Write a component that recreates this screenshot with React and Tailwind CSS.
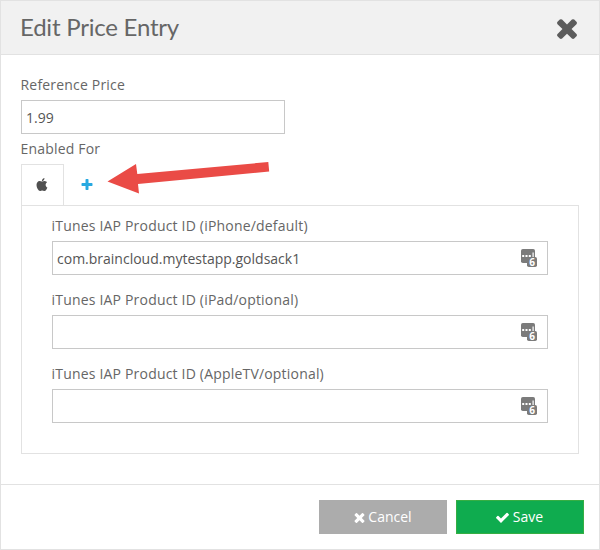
import React from "react";

const PATHS = {
  times:
    "M1490 1322q0 40-28 68l-136 136q-28 28-68 28t-68-28l-294-294-294 294q-28 28-68 28t-68-28l-136-136q-28-28-28-68t28-68l294-294-294-294q-28-28-28-68t28-68l136-136q28-28 68-28t68 28l294 294 294-294q28-28 68-28t68 28l136 136q28 28 28 68t-28 68l-294 294 294 294q28 28 28 68z",
  check:
    "M1671 566q0 40-28 68l-724 724-136 136q-28 28-68 28t-68-28l-136-136-362-362q-28-28-28-68t28-68l136-136q28-28 68-28t68 28l294 295 656-657q28-28 68-28t68 28l136 136q28 28 28 68z",
  plus:
    "M1600 736v192q0 40-28 68t-68 28h-416v416q0 40-28 68t-68 28h-192q-40 0-68-28t-28-68v-416h-416q-40 0-68-28t-28-68v-192q0-40 28-68t68-28h416v-416q0-40 28-68t68-28h192q40 0 68 28t28 68v416h416q40 0 68 28t28 68z",
  apple:
    "M1585 1215q-39 125-123 250-129 196-257 196-49 0-140-32-86-32-151-32-61 0-142 33-81 34-132 34-152 0-301-259-147-261-147-503 0-228 113-374 113-144 284-144 72 0 177 30 104 30 138 30 45 0 143-34 102-34 173-34 119 0 213 65 52 36 104 100-79 67-114 118-65 94-65 207 0 124 69 223t158 126zm-376-1173q0 61-29 136-30 75-93 138-54 54-108 72-37 11-104 17 3-149 78-257 74-107 250-148 1 3 2.500 11t2.500 11q0 4 .5 10t.5 10z",
};

function Icon({ name, className }) {
  return (
    <svg viewBox="0 0 1792 1792" fill="currentColor" className={className}>
      <path d={PATHS[name]} />
    </svg>
  );
}

// Password manager badge shown at the end of a field
function FieldBadge() {
  return (
    <svg viewBox="0 0 17 19" className="h-[19px] w-[17px] shrink-0">
      <rect x="0" y="0" width="14" height="14" rx="1.8" fill="#7b7b7b" />
      <g fill="#fff">
        <rect x="1.200" y="6" width="2" height="2" />
        <rect x="4.500" y="6" width="2" height="2" />
        <rect x="7.800" y="6" width="2" height="2" />
        <rect x="11.500" y="3.500" width="1.200" height="5" />
      </g>
      <rect x="6" y="8" width="10" height="10" rx="1.8" fill="#7b7b7b" />
      <text x="11.200" y="16.500" textAnchor="middle" fontSize="10" fontWeight="700" fill="#fff" fontFamily="Open Sans, sans-serif">
        6
      </text>
    </svg>
  );
}

function ProductField({ label, value }) {
  return (
    <div className="h-[74px]">
      <div className="-ml-px h-[25px] pl-[0.500px] leading-5 tracking-[0.190px]">{label}</div>
      <div className="flex h-[34px] items-center justify-between border border-[#c8c8c8] pr-[9px] pl-1 text-[#555]">
        <span>{value}</span>
        <FieldBadge />
      </div>
    </div>
  );
}

export default function App() {
  return (
    <div className="flex h-[550px] w-[600px] flex-col border border-[#e2e2e2] bg-white font-['Open_Sans',sans-serif] text-[14px] text-[#666]">
      <header className="flex h-[54px] shrink-0 justify-between border-b border-[#e2e2e2] bg-[#f1f1f1] pr-[17px] pl-[19px]">
        <h1 className="pt-[10px] font-['Lato',sans-serif] text-[24px] leading-8 tracking-[-0.220px]">Edit Price Entry</h1>
        <button aria-label="Close" className="mt-3 h-[30px] text-[#5c5c5c]">
          <Icon name="times" className="size-[30px]" />
        </button>
      </header>

      <main className="flex-1 px-5 pt-5">
        <div className="-ml-px h-[25px] pl-[0.500px] leading-5 tracking-[0.190px]">Reference Price</div>
        <div className="flex h-[34px] w-[264px] items-center border border-[#c8c8c8] pl-1 text-[#555]">1.99</div>
        <div className="-ml-px h-[30px] pt-[5px] pl-[0.500px] leading-5 tracking-[0.190px]">Enabled For</div>

        <div className="relative flex h-[41px]">
          <div className="flex w-[43px] justify-center border border-b-0 border-[#e2e2e2] pt-[13px] pr-[2px] text-[#505050]">
            <Icon name="apple" className="size-[14px]" />
          </div>
          <button className="flex w-[46px] justify-center pt-[14px] text-[#27a9e1]">
            <Icon name="plus" className="size-[14px]" />
          </button>
          <svg viewBox="107 160 163 36" className="absolute top-[-4px] left-[86px] h-[36px] w-[163px]">
            <path d="M107.500 181.500L136 164L137.300 174L268.300 162L269.200 171.500L138 184L139 193.500Z" fill="#ea4b46" />
          </svg>
        </div>

        <section className="h-[249px] border border-[#e2e2e2] px-[30px] pt-[10px]">
          <ProductField label="iTunes IAP Product ID (iPhone/default)" value="com.braincloud.mytestapp.goldsack1" />
          <ProductField label="iTunes IAP Product ID (iPad/optional)" />
          <ProductField label="iTunes IAP Product ID (AppleTV/optional)" />
        </section>
      </main>

      <footer className="flex h-[65px] shrink-0 justify-end gap-[9px] border-t border-[#e2e2e2] pt-[15px] pr-[15px] text-white">
        <button className="flex h-[34px] w-[128px] items-center justify-center gap-[1px] bg-[#acacac] pr-[2px]">
          <Icon name="times" className="size-[15px]" />
          <span className="-mt-[2px]">Cancel</span>
        </button>
        <button className="flex h-[34px] w-[128px] items-center justify-center gap-[3px] border border-[#36ae43] bg-[#0fac4f] pr-[2px]">
          <Icon name="check" className="size-[15px]" />
          <span className="-mt-[2px]">Save</span>
        </button>
      </footer>
    </div>
  );
}
